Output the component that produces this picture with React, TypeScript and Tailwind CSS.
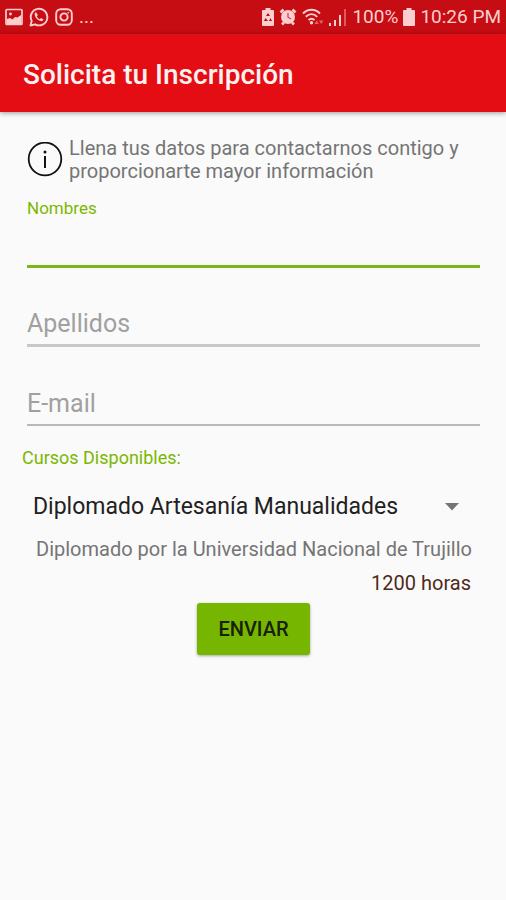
import { useState } from "react";

const PictureIcon = () => (
    <svg className="h-[18px] w-[18px]" viewBox="0 0 18 18" fill="none">
        <rect x="1" y="1.5" width="16" height="15" rx="1" stroke="currentColor" strokeWidth="1.7" />
        <path d="M2 11l3-1 2.500 1.500L10 9l2.500.5L16 7v9H2z" fill="currentColor" />
        <circle cx="5.5" cy="6" r="1.4" fill="currentColor" />
    </svg>
);

const WhatsappIcon = () => (
    <svg className="h-5 w-5" viewBox="0 0 20 20" fill="none">
        <path
            d="M1.5 18.5l1.200-4.600A8.300 8.300 0 1 1 6 17.300z"
            stroke="currentColor"
            strokeWidth="1.9"
            strokeLinejoin="round"
        />
        <path
            d="M7 5.300c-.9.300-1.600 1.300-1.300 2.600.7 3 3.300 5.500 6.100 6.200 1.400.2 2.500-.6 2.600-1.900l-2.400-1.300-1.200 1.300c-1.500-.7-2.400-1.700-3-3L8.900 8z"
            fill="currentColor"
        />
    </svg>
);

const InstagramIcon = () => (
    <svg className="h-[18px] w-[18px]" viewBox="0 0 18 18" fill="none" stroke="currentColor" strokeWidth="1.9">
        <rect x="1.2" y="1.2" width="15.6" height="15.6" rx="4.5" />
        <circle cx="9" cy="9" r="3.6" />
        <circle cx="13.2" cy="4.8" r=".5" strokeWidth="1" />
    </svg>
);

const BatterySaverIcon = () => (
    <svg className="h-[18px] w-3" viewBox="0 0 12 18">
        <path d="M3.5 0h5v2H11a1 1 0 0 1 1 1v14a1 1 0 0 1-1 1H1a1 1 0 0 1-1-1V3a1 1 0 0 1 1-1h2.500z" fill="currentColor" />
        <path d="M6 5l2 3H4zM2 13l1.500-3L6 13zM10 13l-1.500-3L7 13z" fill="#b90d12" />
    </svg>
);

const AlarmIcon = () => (
    <svg className="h-[18px] w-[18px]" viewBox="0 0 18 18" fill="none">
        <circle cx="9" cy="9" r="7" fill="currentColor" />
        <path d="M1.5 4.500l3-3M16.500 4.500l-3-3M3 16.500l2-2M15 16.500l-2-2" stroke="currentColor" strokeWidth="2.5" />
        <path d="M9 5v4.200l3 1.800" stroke="#d4464a" strokeWidth="1.3" />
    </svg>
);

const WifiIcon = () => (
    <svg className="h-[18px] w-[22px]" viewBox="0 0 22 18" fill="none">
        <path
            d="M1 5.500c5-5 12-5 17 0M3.800 8.800c3.500-3.400 8-3.400 11.400 0M6.500 12c2-1.800 4-1.800 6 0"
            stroke="currentColor"
            strokeWidth="1.9"
        />
        <circle cx="9.5" cy="14.8" r="1.7" fill="currentColor" />
        <path d="M12.500 16l2.200-3.500 2.200 3.500zM17 12.500h4.400L19.200 16z" fill="#e2646a" />
    </svg>
);

const SignalIcon = () => (
    <svg className="h-[18px] w-[18px]" viewBox="0 0 18 18">
        <path d="M0 15h2v3H0zM5 12h2v6H5zM10 7h2v11h-2z" fill="currentColor" />
        <path d="M15 1h2v17h-2z" fill="#df5a5f" />
    </svg>
);

const BatteryIcon = () => (
    <svg className="h-[18px] w-3" viewBox="0 0 12 18">
        <path d="M3.5 0h5v2H11a1 1 0 0 1 1 1v14a1 1 0 0 1-1 1H1a1 1 0 0 1-1-1V3a1 1 0 0 1 1-1h2.500z" fill="currentColor" />
    </svg>
);

const InfoIcon = () => (
    <svg className="h-9 w-9 shrink-0" viewBox="0 0 36 36" fill="none">
        <circle cx="18" cy="17" r="16.3" stroke="#111" strokeWidth="1.8" />
        <circle cx="18" cy="10" r="1.5" fill="#111" />
        <path d="M18 14v12" stroke="#111" strokeWidth="2" />
    </svg>
);

const StatusBar = () => (
    <div className="flex h-[34px] items-center justify-between bg-[#c60d13] px-[5px] text-[19px] text-[#fbcfcf]">
        <div className="flex items-center gap-[6px]">
            <PictureIcon />
            <WhatsappIcon />
            <InstagramIcon />
            <span>...</span>
        </div>
        <div className="flex items-center gap-[5px]">
            <BatterySaverIcon />
            <AlarmIcon />
            <WifiIcon />
            <SignalIcon />
            <span>100%</span>
            <BatteryIcon />
            <span>10:26 PM</span>
        </div>
    </div>
);

const App = () => {
    const [course, setCourse] = useState("Diplomado Artesanía Manualidades");

    return (
        <div className="min-h-screen bg-[#fafafa] font-[Roboto,sans-serif]">
            <StatusBar />
            <header className="flex h-[78px] items-center bg-[#e30d13] px-[23px] pt-1 shadow-[0_1px_5px_rgba(0,0,0,0.4)]">
                <h1 className="text-[28px] font-medium text-[#fff1f0]">Solicita tu Inscripción</h1>
            </header>

            <form className="pl-[27px] pr-[26px] pt-[25px]" onSubmit={(e) => e.preventDefault()}>
                <div className="flex items-center gap-[6px]">
                    <InfoIcon />
                    <p className="text-[20px] leading-[23px] text-[#757575]">
                        Llena tus datos para contactarnos contigo y proporcionarte mayor información
                    </p>
                </div>

                <label htmlFor="nombres" className="mt-[15px] block text-[17px] leading-5 text-[#7ab800]">
                    Nombres
                </label>
                <input
                    id="nombres"
                    type="text"
                    className="block h-[50px] w-full border-b-3 border-[#7cb518] text-[25px] text-[#212121] outline-none"
                />
                <input
                    type="text"
                    aria-label="Apellidos"
                    placeholder="Apellidos"
                    className="mt-[35px] block h-11 w-full border-b-3 border-[#c8c8c8] text-[25px] text-[#212121] outline-none placeholder:text-[#a0a0a0]"
                />
                <input
                    type="email"
                    aria-label="E-mail"
                    placeholder="E-mail"
                    className="mt-[35px] block h-11 w-full border-b-2 border-[#b8b8b8] text-[25px] text-[#212121] outline-none placeholder:text-[#a0a0a0]"
                />

                <label htmlFor="curso" className="-ml-[5px] mt-5 block text-[18px] leading-6 text-[#7ab800]">
                    Cursos Disponibles:
                </label>
                <div className="relative mt-[17px]">
                    <select
                        id="curso"
                        value={course}
                        onChange={(e) => setCourse(e.target.value)}
                        className="block h-10 w-full appearance-none bg-transparent pl-[6px] pr-12 text-[23px] text-[#212121]"
                    >
                        <option>Diplomado Artesanía Manualidades</option>
                    </select>
                    <svg
                        className="pointer-events-none absolute right-[21px] top-4 h-2 w-[14px]"
                        viewBox="0 0 14 8"
                        fill="#757575"
                    >
                        <path d="M0 0h14L7 7.500z" />
                    </svg>
                </div>

                <p className="mt-[10px] pl-[9px] text-[20px] leading-6 text-[#757575]">
                    Diplomado por la Universidad Nacional de Trujillo
                </p>
                <p className="mt-[10px] pr-[9px] text-right text-[20px] leading-6 text-[#4e2a1a]">1200 horas</p>

                <button
                    type="submit"
                    className="mx-auto mt-2 block h-[52px] rounded-[3px] bg-[#76b500] px-[21px] text-[20px] font-medium text-[#17200a] shadow-[0_1px_3px_rgba(0,0,0,0.35)]"
                >
                    ENVIAR
                </button>
            </form>
        </div>
    );
};

export default App;
